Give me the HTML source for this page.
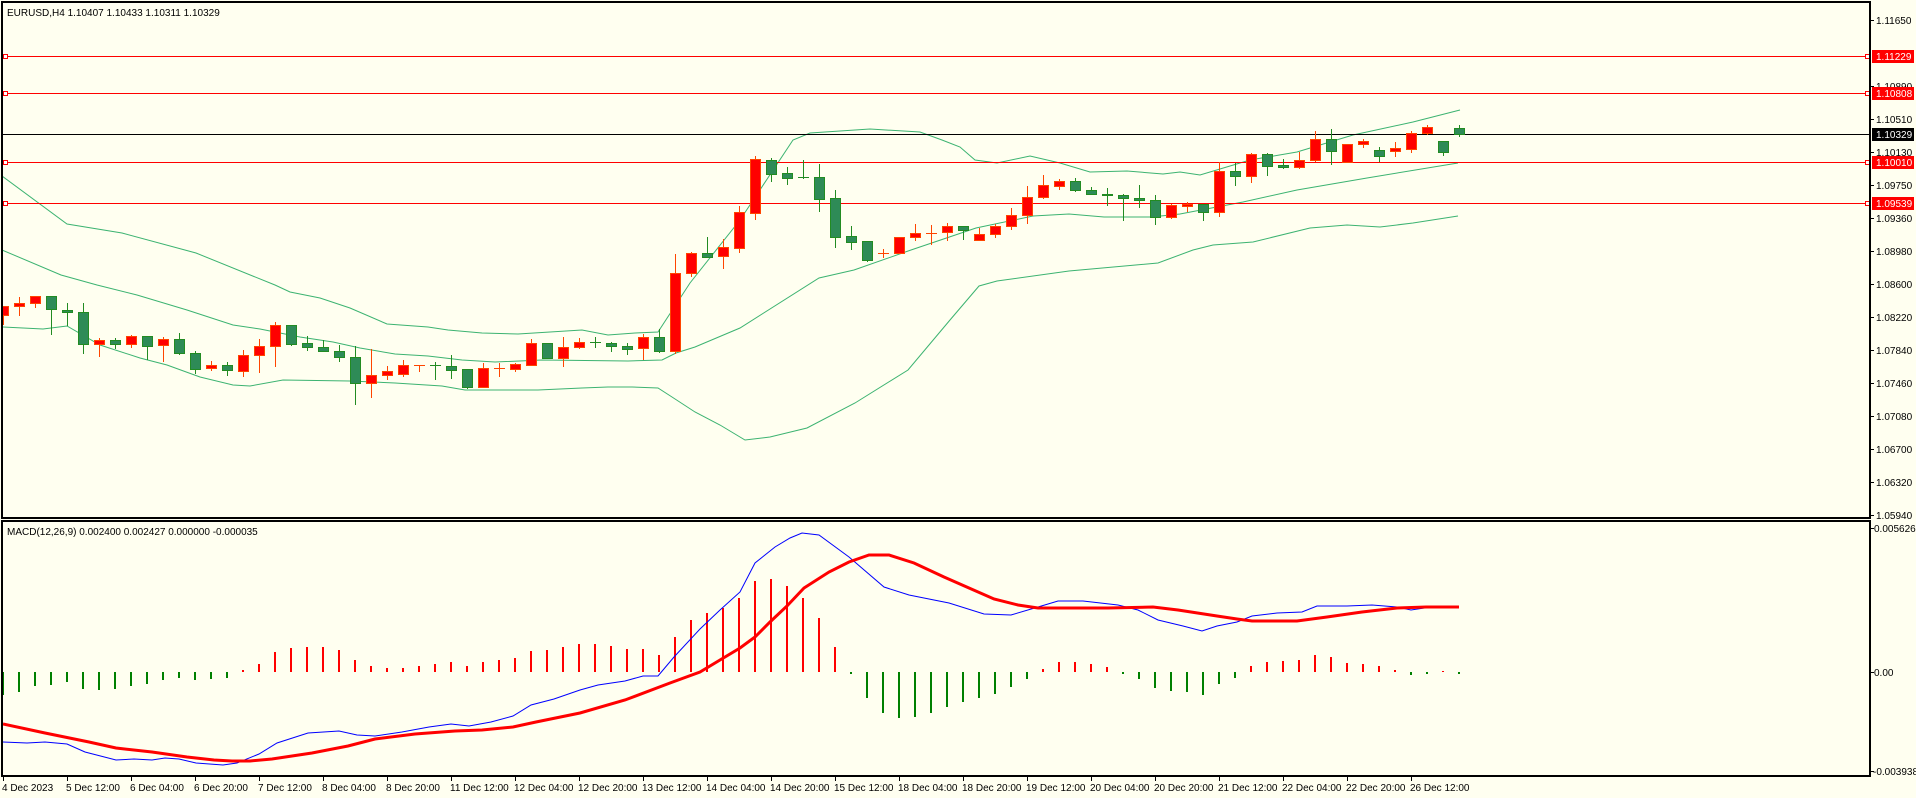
<!DOCTYPE html>
<html><head><meta charset="utf-8"><style>
html,body{margin:0;padding:0;background:#fffff0;}
svg{display:block;font-family:"Liberation Sans",sans-serif;font-size:10px;}
.r path{stroke:#ff4500;fill:none;stroke-width:1}
.r rect{fill:#ff0000;stroke:#ff4500;stroke-width:1}
.g path{stroke:#228b22;fill:none;stroke-width:1}
.g rect{fill:#2e8b57;stroke:#228b22;stroke-width:1}
.bb{fill:none;stroke:#3cb371;stroke-width:1}
</style></head><body>
<svg width="1916" height="798" viewBox="0 0 1916 798" xmlns="http://www.w3.org/2000/svg">
<rect width="1916" height="798" fill="#fffff0"/>
<defs><clipPath id="cm"><rect x="3" y="3" width="1867" height="515"/></clipPath>
<clipPath id="cs"><rect x="3" y="521" width="1867" height="255"/></clipPath></defs>

<g clip-path="url(#cm)">
<!-- bollinger -->
<polyline class="bb" points="2,176 67,224 122,233 196,253 275,285 290,292 320,298 350,308 387,324 428,327 448,330 482,333 518,334 582,330 608,335 635,333 658,332 690,283 740,220 793,140 810,133 870,129 920,132 942,140 960,147 975,160 997,163 1030,156 1060,163 1090,172 1127,171 1163,174 1180,172 1200,175 1250,160 1297,152 1353,135 1413,122 1460,110"/>
<polyline class="bb" points="2,250 61,275 97,285 137,295 187,310 233,325 260,329 300,337 333,342 360,348 395,354 428,356 462,360 495,362 542,360 628,361 662,360 676,353 695,347 740,328 819,278 854,270 911,250 976,228 1033,216 1069,214 1104,217 1151,217 1180,214 1243,202 1297,190 1367,178 1458,163"/>
<polyline class="bb" points="2,327 43,329 67,326 100,345 140,358 167,365 200,377 233,385 250,386 283,380 350,381 395,383 442,386 465,390 538,390 582,388 608,387 632,387 658,388 672,397 695,412 720,425 745,440 770,437 807,428 855,403 908,370 950,320 979,286 997,281 1069,271 1158,263 1193,250 1213,245 1253,242 1310,228 1347,225 1380,227 1413,223 1458,216"/>
<!-- level lines -->
<g stroke="#ff0000" stroke-width="1">
<line x1="3" y1="56.5" x2="1870" y2="56.5"/>
<line x1="3" y1="93.5" x2="1870" y2="93.5"/>
<line x1="3" y1="162.5" x2="1870" y2="162.5"/>
<line x1="3" y1="203.5" x2="1870" y2="203.5"/>
</g>
<line x1="3" y1="134.5" x2="1870" y2="134.5" stroke="#000" stroke-width="1"/>
<g fill="#fff" stroke="#ff0000" stroke-width="1">
<rect x="3.5" y="54.5" width="4" height="4"/><rect x="3.5" y="91.5" width="4" height="4"/><rect x="3.5" y="160.5" width="4" height="4"/><rect x="3.5" y="201.5" width="4" height="4"/>
<rect x="1865.5" y="54.5" width="4" height="4"/><rect x="1865.5" y="91.5" width="4" height="4"/><rect x="1865.5" y="160.5" width="4" height="4"/><rect x="1865.5" y="201.5" width="4" height="4"/>
</g>

<!-- red (bullish) candles -->
<g class="r">
<path d="M3.5 306V325M19.5 297V316M35.5 296V308M99.5 338V357M131.5 335V348M163.5 337V362M211.5 361V371M243.5 350V377M259.5 339V373M275.5 322V367M371.5 349V398M387.5 366V380M403.5 360V377M419.5 365V372M414 365.5H425M483.5 363V388M499.5 363V377M494 368.5H505M515.5 363V372M531.5 339V365M563.5 337V367M579.5 338V349M643.5 334V360M675.5 254V354M691.5 252V277M723.5 239V269M739.5 206V253M755.5 156V220M883.5 249V258M878 253.5H889M899.5 237V253M915.5 224V241M931.5 225V245M926 233.5H937M947.5 223V241M979.5 228V240M995.5 224V238M1011.5 208V230M1027.5 186V224M1043.5 175V199M1059.5 179V190M1171.5 204V219M1187.5 202V212M1219.5 162V217M1251.5 153V183M1299.5 152V169M1315.5 131V162M1347.5 144V162M1363.5 139V148M1395.5 142V157M1411.5 131V153M1427.5 125V135"/>
<rect x="-1.5" y="306.5" width="10" height="9"/><rect x="14.5" y="303.5" width="10" height="3"/><rect x="30.5" y="296.5" width="10" height="7"/>
<rect x="94.5" y="340.5" width="10" height="4"/><rect x="126.5" y="336.5" width="10" height="8"/><rect x="158.5" y="339.5" width="10" height="6"/>
<rect x="206.5" y="365.5" width="10" height="3"/><rect x="238.5" y="355.5" width="10" height="16"/><rect x="254.5" y="346.5" width="10" height="9"/><rect x="270.5" y="325.5" width="10" height="21"/>
<rect x="366.5" y="375.5" width="10" height="8"/><rect x="382.5" y="371.5" width="10" height="4"/><rect x="398.5" y="365.5" width="10" height="9"/>
<rect x="478.5" y="368.5" width="10" height="19"/><rect x="510.5" y="364.5" width="10" height="5"/><rect x="526.5" y="343.5" width="10" height="22"/>
<rect x="558.5" y="347.5" width="10" height="11"/><rect x="574.5" y="342.5" width="10" height="5"/><rect x="638.5" y="337.5" width="10" height="11"/>
<rect x="670.5" y="273.5" width="10" height="78"/><rect x="686.5" y="253.5" width="10" height="20"/><rect x="718.5" y="247.5" width="10" height="9"/>
<rect x="734.5" y="212.5" width="10" height="36"/><rect x="750.5" y="159.5" width="10" height="54"/>
<rect x="894.5" y="237.5" width="10" height="16"/><rect x="910.5" y="233.5" width="10" height="4"/><rect x="942.5" y="226.5" width="10" height="6"/>
<rect x="974.5" y="234.5" width="10" height="6"/><rect x="990.5" y="226.5" width="10" height="8"/><rect x="1006.5" y="215.5" width="10" height="11"/>
<rect x="1022.5" y="197.5" width="10" height="18"/><rect x="1038.5" y="185.5" width="10" height="12"/><rect x="1054.5" y="181.5" width="10" height="5"/>
<rect x="1166.5" y="205.5" width="10" height="12"/><rect x="1182.5" y="204.5" width="10" height="2"/><rect x="1214.5" y="171.5" width="10" height="41"/>
<rect x="1246.5" y="154.5" width="10" height="22"/><rect x="1294.5" y="160.5" width="10" height="7"/><rect x="1310.5" y="139.5" width="10" height="21"/>
<rect x="1342.5" y="144.5" width="10" height="18"/><rect x="1358.5" y="141.5" width="10" height="3"/><rect x="1390.5" y="148.5" width="10" height="3"/>
<rect x="1406.5" y="133.5" width="10" height="16"/><rect x="1422.5" y="127.5" width="10" height="6"/>
</g>
<!-- green (bearish) candles -->
<g class="g">
<path d="M51.5 296V335M67.5 303V326M83.5 303V354M115.5 338V349M147.5 336V360M179.5 333V355M195.5 351V374M227.5 362V376M291.5 325V346M307.5 336V351M323.5 340V352M339.5 345V362M355.5 346V405M435.5 362V380M430 365.5H441M451.5 355V379M467.5 369V389M595.5 337V348M590 342.5H601M611.5 342V352M627.5 343V355M659.5 329V353M707.5 237V257M771.5 158V182M787.5 167V185M803.5 160V179M798 177.5H809M819.5 164V212M835.5 190V248M851.5 226V250M867.5 241V262M963.5 226V240M1075.5 178V192M1091.5 187V195M1107.5 188V206M1123.5 194V221M1139.5 185V208M1155.5 195V225M1203.5 204V221M1235.5 163V186M1267.5 153V176M1283.5 159V169M1331.5 129V165M1341.5 129V129M1379.5 147V162M1443.5 141V156M1459.5 125V137"/>
<rect x="46.5" y="296.5" width="10" height="13"/><rect x="62.5" y="310.5" width="10" height="2"/><rect x="78.5" y="312.5" width="10" height="32"/>
<rect x="110.5" y="340.5" width="10" height="4"/><rect x="142.5" y="336.5" width="10" height="10"/><rect x="174.5" y="339.5" width="10" height="14"/>
<rect x="190.5" y="353.5" width="10" height="16"/><rect x="222.5" y="365.5" width="10" height="5"/><rect x="286.5" y="325.5" width="10" height="19"/>
<rect x="302.5" y="343.5" width="10" height="4"/><rect x="318.5" y="347.5" width="10" height="4"/><rect x="334.5" y="351.5" width="10" height="6"/>
<rect x="350.5" y="357.5" width="10" height="26"/><rect x="446.5" y="366.5" width="10" height="4"/><rect x="462.5" y="369.5" width="10" height="18"/>
<rect x="542.5" y="343.5" width="10" height="15"/><rect x="606.5" y="343.5" width="10" height="3"/><rect x="622.5" y="346.5" width="10" height="3"/>
<rect x="654.5" y="337.5" width="10" height="14"/><rect x="702.5" y="253.5" width="10" height="4"/><rect x="766.5" y="160.5" width="10" height="14"/>
<rect x="782.5" y="173.5" width="10" height="5"/><rect x="814.5" y="177.5" width="10" height="22"/><rect x="830.5" y="198.5" width="10" height="39"/>
<rect x="846.5" y="236.5" width="10" height="6"/><rect x="862.5" y="241.5" width="10" height="19"/><rect x="958.5" y="226.5" width="10" height="4"/>
<rect x="1070.5" y="181.5" width="10" height="9"/><rect x="1086.5" y="190.5" width="10" height="4"/><rect x="1102.5" y="194.5" width="10" height="1"/>
<rect x="1118.5" y="195.5" width="10" height="3"/><rect x="1134.5" y="198.5" width="10" height="2"/><rect x="1150.5" y="200.5" width="10" height="17"/>
<rect x="1198.5" y="204.5" width="10" height="8"/><rect x="1230.5" y="171.5" width="10" height="5"/><rect x="1262.5" y="154.5" width="10" height="12"/>
<rect x="1278.5" y="165.5" width="10" height="2"/><rect x="1326.5" y="139.5" width="10" height="12"/><rect x="1374.5" y="150.5" width="10" height="6"/>
<rect x="1438.5" y="141.5" width="10" height="11"/><rect x="1454.5" y="128.5" width="10" height="6"/>
</g>
</g>

<!-- MACD -->
<g clip-path="url(#cs)">
<path stroke="#008000" stroke-width="2" fill="none" d="M3 672V695M19 672V692M35 672V686M51 672V685M67 672V682M83 672V689M99 672V690M115 672V689M131 672V686M147 672V684M163 672V680M179 672V678M195 672V680M211 672V679M227 672V678M851 672V674M867 672V698M883 672V713M899 672V718M915 672V717M931 672V713M947 672V707M963 672V702M979 672V698M995 672V694M1011 672V687M1027 672V679M1123 672V674M1139 672V679M1155 672V688M1171 672V691M1187 672V692M1203 672V695M1219 672V684M1235 672V678M1411 672V675M1427 672V674M1459 672V674"/>
<path stroke="#ff0000" stroke-width="2" fill="none" d="M243 672V670M259 672V664M275 672V652M291 672V648M307 672V647M323 672V647M339 672V650M355 672V660M371 672V666M387 672V668M403 672V668M419 672V666M435 672V664M451 672V662M467 672V666M483 672V662M499 672V660M515 672V658M531 672V651M547 672V650M563 672V647M579 672V644M595 672V644M611 672V646M627 672V649M643 672V649M659 672V655M675 672V637M691 672V620M707 672V613M723 672V608M739 672V598M755 672V581M771 672V579M787 672V586M803 672V598M819 672V618M835 672V647M1043 672V669M1059 672V662M1075 672V662M1091 672V664M1107 672V667M1251 672V666M1267 672V662M1283 672V661M1299 672V660M1315 672V655M1331 672V657M1347 672V663M1363 672V664M1379 672V666M1395 672V670M1443 672V671"/>
<polyline fill="none" stroke="#0000ff" stroke-width="1" points="3,742 27,743 45,742 67,744 85,752 116,760 134,759 152,760 165,758 179,759 196,763 223,765 237,763 259,754 277,743 308,733 339,731 357,735 375,736 402,732 429,727 451,724 469,726 491,722 513,716 531,705 554,699 580,690 598,685 625,681 643,676 658,676 674,657 700,629 720,610 740,592 755,563 775,547 790,538 802,533 819,535 849,557 884,587 909,595 949,603 984,614 1011,615 1038,607 1058,601 1083,601 1118,605 1138,610 1158,620 1183,626 1202,631 1217,626 1237,622 1252,616 1277,613 1302,612 1317,606 1347,606 1372,605 1397,607 1411,610 1431,607 1459,608"/>
<polyline fill="none" stroke="#ff0000" stroke-width="3" points="3,724 45,733 89,742 116,748 152,752 187,757 214,760 232,761 250,761 272,759 312,753 348,746 375,739 415,734 455,731 482,730 513,727 536,722 580,713 625,700 670,683 700,672 720,660 740,648 755,637 770,622 787,606 804,588 829,572 849,562 869,555 889,555 914,563 944,577 969,588 994,599 1018,605 1038,608 1108,608 1153,607 1178,610 1217,616 1237,619 1252,621 1297,621 1327,617 1362,612 1397,608 1426,607 1459,607"/>
</g>

<!-- frames -->
<g fill="none" stroke="#000" stroke-width="2">
<rect x="2" y="2" width="1868" height="516"/>
<rect x="2" y="521" width="1868" height="255"/>
</g>

<text x="7" y="16">EURUSD,H4  1.10407 1.10433 1.10311 1.10329</text>
<text x="7" y="535">MACD(12,26,9) 0.002400 0.002427 0.000000 -0.000035</text>

<!-- price axis -->
<g stroke="#000" stroke-width="1">
<path d="M1870 20.5h4M1870 86.5h4M1870 119.5h4M1870 152.5h4M1870 185.5h4M1870 218.5h4M1870 251.5h4M1870 284.5h4M1870 317.5h4M1870 350.5h4M1870 383.5h4M1870 416.5h4M1870 449.5h4M1870 482.5h4M1870 515.5h4M1870 528.5h4M1870 672.5h4M1870 771.5h4"/>
</g>
<g fill="#000">
<text x="1876" y="24">1.11650</text><text x="1876" y="90">1.10890</text><text x="1876" y="123">1.10510</text>
<text x="1876" y="156">1.10130</text><text x="1876" y="189">1.09750</text><text x="1876" y="222">1.09360</text>
<text x="1876" y="255">1.08980</text><text x="1876" y="288">1.08600</text><text x="1876" y="321">1.08220</text>
<text x="1876" y="354">1.07840</text><text x="1876" y="387">1.07460</text><text x="1876" y="420">1.07080</text>
<text x="1876" y="453">1.06700</text><text x="1876" y="486">1.06320</text><text x="1876" y="519">1.05940</text>
<text x="1874" y="532">0.005626</text><text x="1874" y="676">0.00</text><text x="1873" y="775">-0.003938</text>
</g>
<g>
<rect x="1872" y="50" width="42" height="13" fill="#ff0000"/><rect x="1872" y="87" width="42" height="13" fill="#ff0000"/>
<rect x="1872" y="128" width="42" height="13" fill="#000"/><rect x="1872" y="156" width="42" height="13" fill="#ff0000"/>
<rect x="1872" y="197" width="42" height="13" fill="#ff0000"/>
</g>
<g fill="#fff">
<text x="1876" y="60">1.11229</text><text x="1876" y="97">1.10808</text><text x="1876" y="138">1.10329</text>
<text x="1876" y="166">1.10010</text><text x="1876" y="207">1.09539</text>
</g>

<!-- time axis -->
<path stroke="#000" stroke-width="1" d="M3.5 777v4M67.5 777v4M131.5 777v4M195.5 777v4M259.5 777v4M323.5 777v4M387.5 777v4M451.5 777v4M515.5 777v4M579.5 777v4M643.5 777v4M707.5 777v4M771.5 777v4M835.5 777v4M899.5 777v4M963.5 777v4M1027.5 777v4M1091.5 777v4M1155.5 777v4M1219.5 777v4M1283.5 777v4M1347.5 777v4M1411.5 777v4"/>
<g fill="#000">
<text x="2" y="791">4 Dec 2023</text><text x="66" y="791">5 Dec 12:00</text><text x="130" y="791">6 Dec 04:00</text>
<text x="194" y="791">6 Dec 20:00</text><text x="258" y="791">7 Dec 12:00</text><text x="322" y="791">8 Dec 04:00</text>
<text x="386" y="791">8 Dec 20:00</text><text x="450" y="791">11 Dec 12:00</text><text x="514" y="791">12 Dec 04:00</text>
<text x="578" y="791">12 Dec 20:00</text><text x="642" y="791">13 Dec 12:00</text><text x="706" y="791">14 Dec 04:00</text>
<text x="770" y="791">14 Dec 20:00</text><text x="834" y="791">15 Dec 12:00</text><text x="898" y="791">18 Dec 04:00</text>
<text x="962" y="791">18 Dec 20:00</text><text x="1026" y="791">19 Dec 12:00</text><text x="1090" y="791">20 Dec 04:00</text>
<text x="1154" y="791">20 Dec 20:00</text><text x="1218" y="791">21 Dec 12:00</text><text x="1282" y="791">22 Dec 04:00</text>
<text x="1346" y="791">22 Dec 20:00</text><text x="1410" y="791">26 Dec 12:00</text>
</g>
</svg>
</body></html>
